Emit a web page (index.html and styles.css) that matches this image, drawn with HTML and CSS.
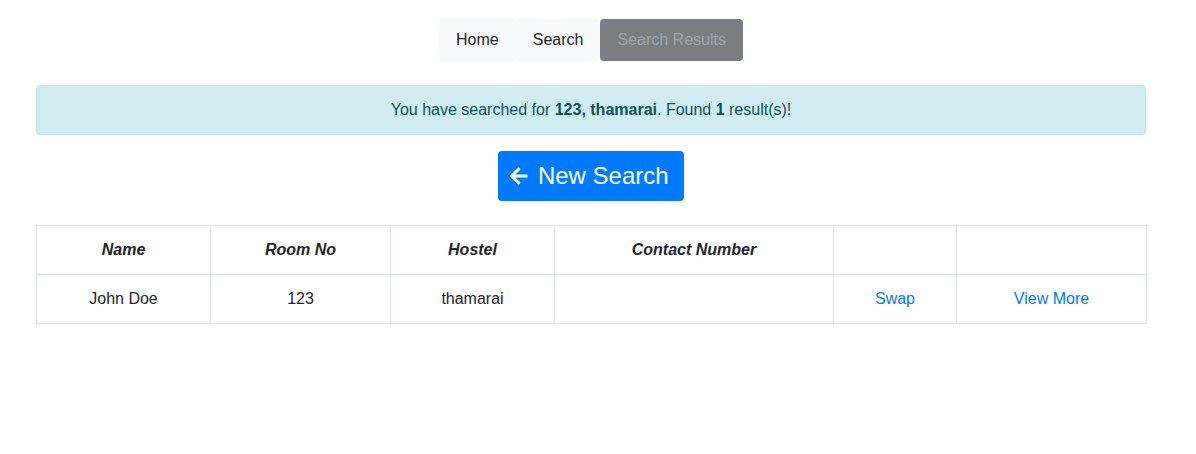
FILE: index.html
```html
<!DOCTYPE html>
<html>
<head>
<meta charset="utf-8">
<title>Search Results</title>
<link rel="stylesheet" href="styles.css">
</head>
<body>
<div class="page">
  <nav class="nav">
    <a class="nav-btn">Home</a>
    <a class="nav-btn">Search</a>
    <a class="nav-btn active">Search Results</a>
  </nav>
  <div class="alert">You have searched for <b>123, thamarai</b>. Found <b>1</b> result(s)!</div>
  <div class="actions">
    <a class="btn-primary"><svg class="arrow" viewBox="0 0 448 512"><path fill="#fff" d="M257.5 445.1l-22.2 22.2c-9.4 9.4-24.6 9.4-33.9 0L7 273c-9.4-9.4-9.4-24.6 0-33.9L201.4 44.7c9.4-9.4 24.6-9.4 33.9 0l22.2 22.2c9.5 9.5 9.3 25-.4 34.3L136.6 216H424c13.3 0 24 10.7 24 24v32c0 13.3-10.7 24-24 24H136.6l120.5 114.8c9.8 9.3 10 24.8.4 34.3z"/></svg><span>New Search</span></a>
  </div>
  <table class="results">
    <colgroup>
      <col class="c1"><col class="c2"><col class="c3"><col class="c4"><col class="c5"><col class="c6">
    </colgroup>
    <thead>
      <tr><th>Name</th><th>Room No</th><th>Hostel</th><th>Contact Number</th><th></th><th></th></tr>
    </thead>
    <tbody>
      <tr><td>John Doe</td><td>123</td><td>thamarai</td><td></td><td><a class="link">Swap</a></td><td><a class="link">View More</a></td></tr>
    </tbody>
  </table>
</div>
</body>
</html>
```
FILE: styles.css
```css
html, body {
  margin: 0;
  padding: 0;
  background: #fff;
}
body {
  font-family: "Liberation Sans", Arial, sans-serif;
  font-size: 16px;
  line-height: 24px;
  color: #212529;
}
.page {
  width: 1110px;
  margin-left: 36px;
  padding-top: 19px;
}
.nav {
  display: flex;
  justify-content: center;
}
.nav-btn {
  display: block;
  padding: 9px 17px;
  border-radius: 4px;
  background: #f8f9fa;
  color: #212529;
}
.nav-btn.active {
  background: #7a7e83;
  color: #a3a6aa;
}
.alert {
  margin-top: 24px;
  padding: 12px 20px;
  border: 1px solid #bee5eb;
  border-radius: 4px;
  background: #d1ecf1;
  color: #0c5460;
  text-align: center;
}
.alert b {
  font-weight: bold;
}
.actions {
  display: flex;
  justify-content: center;
  margin-top: 16px;
}
.btn-primary {
  display: flex;
  align-items: center;
  gap: 10px;
  padding: 10px 15px 10px 12px;
  border-radius: 4px;
  background: #007bff;
  color: #fff;
  font-size: 24px;
  line-height: 30px;
}
.arrow {
  width: 17.5px;
  height: 20px;
}
.results {
  margin-top: 24px;
  width: 1110px;
  border-collapse: collapse;
  table-layout: fixed;
}
.c1 { width: 174px; }
.c2 { width: 180px; }
.c3 { width: 164px; }
.c4 { width: 279px; }
.c5 { width: 123px; }
.c6 { width: 190px; }
.results th,
.results td {
  border: 1px solid #dee2e6;
  padding: 12px;
  height: 24px;
  text-align: center;
}
.results th {
  font-weight: bold;
  font-style: italic;
}
.link {
  color: #007bff;
}
```
